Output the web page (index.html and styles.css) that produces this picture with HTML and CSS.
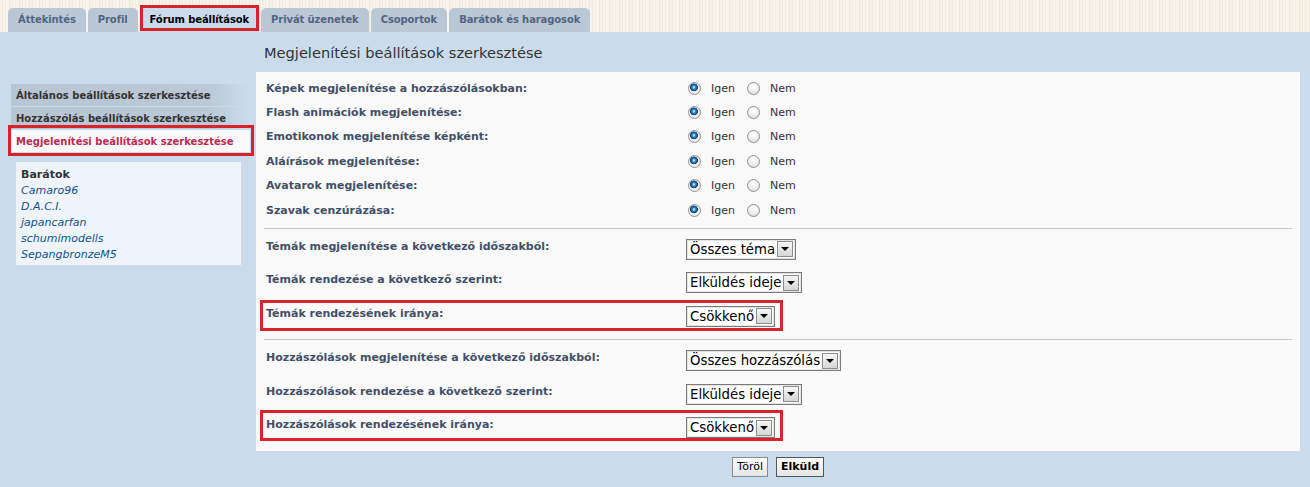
FILE: index.html
```html
<!DOCTYPE html>
<html lang="hu">
<head>
<meta charset="utf-8">
<title>Fórum beállítások</title>
<link rel="stylesheet" href="styles.css">
</head>
<body>
<div class="page">
  <nav class="tabs">
    <a class="tab">Áttekintés</a>
    <a class="tab">Profil</a>
    <a class="tab active mark">Fórum beállítások</a>
    <a class="tab">Privát üzenetek</a>
    <a class="tab">Csoportok</a>
    <a class="tab">Barátok és haragosok</a>
  </nav>
  <div class="panel">
    <aside class="side">
      <ul class="menu">
        <li>Általános beállítások szerkesztése</li>
        <li>Hozzászólás beállítások szerkesztése</li>
        <li class="active mark">Megjelenítési beállítások szerkesztése</li>
      </ul>
      <div class="friends">
        <b>Barátok</b>
        <a>Camaro96</a>
        <a>D.A.C.I.</a>
        <a>japancarfan</a>
        <a>schumimodells</a>
        <a>SepangbronzeM5</a>
      </div>
    </aside>
    <main class="main">
      <h2 class="title">Megjelenítési beállítások szerkesztése</h2>
      <div class="box">
        <div class="group">
          <div class="row"><span class="lbl">Képek megjelenítése a hozzászólásokban:</span><span class="opts"><label><span class="radio on"></span>Igen</label><label><span class="radio"></span>Nem</label></span></div>
          <div class="row"><span class="lbl">Flash animációk megjelenítése:</span><span class="opts"><label><span class="radio on"></span>Igen</label><label><span class="radio"></span>Nem</label></span></div>
          <div class="row"><span class="lbl">Emotikonok megjelenítése képként:</span><span class="opts"><label><span class="radio on"></span>Igen</label><label><span class="radio"></span>Nem</label></span></div>
          <div class="row"><span class="lbl">Aláírások megjelenítése:</span><span class="opts"><label><span class="radio on"></span>Igen</label><label><span class="radio"></span>Nem</label></span></div>
          <div class="row"><span class="lbl">Avatarok megjelenítése:</span><span class="opts"><label><span class="radio on"></span>Igen</label><label><span class="radio"></span>Nem</label></span></div>
          <div class="row"><span class="lbl">Szavak cenzúrázása:</span><span class="opts"><label><span class="radio on"></span>Igen</label><label><span class="radio"></span>Nem</label></span></div>
        </div>
        <hr class="sep first">
        <div class="group">
          <div class="srow"><span class="lbl">Témák megjelenítése a következő időszakból:</span><span class="sel"><span class="val">Összes téma</span><span class="arr"></span></span></div>
          <div class="srow"><span class="lbl">Témák rendezése a következő szerint:</span><span class="sel"><span class="val">Elküldés ideje</span><span class="arr"></span></span></div>
          <div class="srow mark"><span class="lbl">Témák rendezésének iránya:</span><span class="sel"><span class="val">Csökkenő</span><span class="arr"></span></span></div>
        </div>
        <hr class="sep">
        <div class="group">
          <div class="srow"><span class="lbl">Hozzászólások megjelenítése a következő időszakból:</span><span class="sel"><span class="val">Összes hozzászólás</span><span class="arr"></span></span></div>
          <div class="srow"><span class="lbl">Hozzászólások rendezése a következő szerint:</span><span class="sel"><span class="val">Elküldés ideje</span><span class="arr"></span></span></div>
          <div class="srow mark last"><span class="lbl">Hozzászólások rendezésének iránya:</span><span class="sel"><span class="val">Csökkenő</span><span class="arr"></span></span></div>
        </div>
      </div>
      <div class="buttons">
        <button type="button">Töröl</button>
        <button type="button" class="primary">Elküld</button>
      </div>
    </main>
  </div>
</div>
</body>
</html>
```

FILE: styles.css
```css
* { box-sizing: border-box; }
html, body { margin: 0; }
body {
  font-family: "DejaVu Sans", Verdana, sans-serif;
  font-size: 11px;
  color: #333;
  background: #cadceb;
}
.page {
  width: 1310px;
  height: 487px;
  overflow: hidden;
  display: flex;
  flex-direction: column;
}

/* tabs */
.tabs {
  height: 32px;
  flex: none;
  display: flex;
  align-items: flex-end;
  gap: 2px;
  padding-left: 8px;
  background: repeating-linear-gradient(90deg, #f6f3e8 0 2px, #eeeadb 2px 3px, #f8f6ec 3px 5px, #f1edde 5px 6px, #f7f4e9 6px 9px, #ece7d7 9px 10px);
}
.tab {
  position: relative;
  height: 24px;
  line-height: 24px;
  padding: 0 10px;
  background: #bac8d6;
  color: #536482;
  font-weight: bold;
  font-size: 10px;
  letter-spacing: -0.1px;
  border-radius: 5px 5px 0 0;
}
.tab.active { background: #cadceb; color: #000; }

.mark { position: relative; }
.mark::after {
  content: "";
  position: absolute;
  border: 3px solid #d9232b;
  pointer-events: none;
}
.tab.mark::after { left: 0; right: 0; top: -3px; bottom: 1px; }

/* panel */
.panel { flex: 1; display: flex; background: #cadceb; }
.side { width: 256px; flex: none; padding-top: 52px; }
.menu { list-style: none; margin: 0 6px 0 11px; padding: 0; }
.menu li {
  height: 22px;
  line-height: 23px;
  margin-bottom: 1px;
  padding-left: 5px;
  font-weight: bold;
  font-size: 10px;
  color: #333;
  background: linear-gradient(90deg, #b8c5d2 0%, #bbc8d5 82%, #cadceb 100%);
}
.menu li.active { background: #f9f9f9; color: #bc2a4d; }
.menu li.mark::after { left: -3px; right: -4px; top: -5px; bottom: -4px; }

.friends {
  margin: 10px 15px 0 16px;
  background: #eef4f9;
  padding: 3px 5px 2px;
  line-height: 16px;
  font-size: 11px;
}
.friends b { display: block; color: #333; line-height: 17px; padding-top: 1px; }
.friends a { display: block; font-style: italic; color: #105289; }

/* main */
.main { flex: 1; padding-right: 10px; display: flex; flex-direction: column; }
.title {
  margin: 0;
  height: 40px;
  padding: 12px 0 0 8px;
  font-size: 14.6px;
  line-height: 18px;
  font-weight: normal;
  color: #333;
}
.box { background: #f9f9f9; padding: 4px 10px 0 10px; }

.row { display: flex; align-items: center; height: 24.4px; }
.lbl { width: 422px; flex: none; font-weight: bold; color: #425067; font-size: 11px; }
.opts { display: flex; align-items: center; }
.opts label { display: inline-flex; align-items: center; color: #333; font-size: 11px; }
.opts label + label { margin-left: 12px; }
.radio {
  width: 13px;
  height: 13px;
  border-radius: 50%;
  margin-right: 10px;
  border: 1px solid #929292;
  background: radial-gradient(circle at 50% 35%, #ffffff 0, #ececec 55%, #cfcfcf 100%);
}
.radio.on {
  background: radial-gradient(circle at 45% 40%, #a8dcf7 0 0.8px, #3a8cc4 1.6px, #175a92 3px, #0e3d66 3.7px, #f2f2f2 4.2px, #dcdcdc 100%);
}

.sep { border: 0; border-top: 1px solid #c2c8cf; margin: 0 -2px 10px -2px; height: 0; }
.sep.first { margin-top: 5.5px; }

.srow { display: flex; align-items: flex-start; margin-bottom: 12.5px; }
.srow .lbl { width: 420px; padding-top: 1px; line-height: 13px; }
.srow.mark { width: max-content; }
.srow.mark::after { left: -6px; right: -8px; top: -6px; bottom: -4px; }
.srow.mark.last::after { top: -7px; bottom: -3px; }

.sel {
  display: inline-flex;
  align-items: center;
  height: 21px;
  border: 1px solid #7b7b7b;
  box-shadow: inset 0 0 0 1px #e4e4e4;
  background: #fff;
  font-size: 13.3px;
  color: #000;
  padding: 0 2px 0 3px;
}
.sel .arr {
  width: 16px;
  height: 16px;
  margin-left: 2px;
  border: 1px solid #8d8d8d;
  background: linear-gradient(#f6f6f6, #d6d6d6);
  display: flex;
  align-items: center;
  justify-content: center;
}
.sel .arr::before {
  content: "";
  border-left: 4px solid transparent;
  border-right: 4px solid transparent;
  border-top: 4px solid #000;
}

.buttons { display: flex; justify-content: center; gap: 8px; margin-top: 6px; }
button {
  font-family: inherit;
  font-size: 11px;
  height: 20px;
  padding: 0 4px;
  border: 1px solid #8a8a8a;
  background: linear-gradient(#ffffff, #e4e4e4);
  color: #000;
}
button.primary { font-weight: bold; border-color: #555; }
```
